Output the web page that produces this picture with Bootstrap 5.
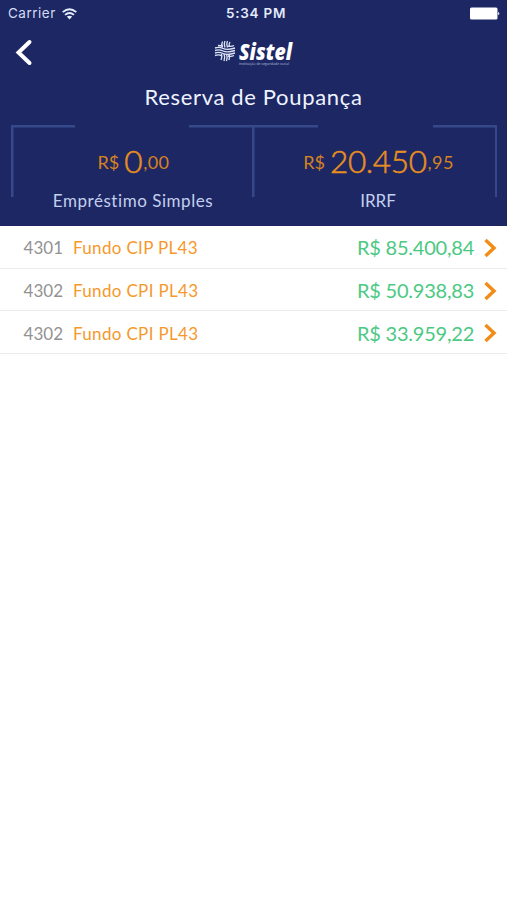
<!DOCTYPE html>
<html lang="pt-BR">
<head>
<meta charset="utf-8">
<meta name="viewport" content="width=device-width, initial-scale=1">
<title>Reserva de Poupança</title>
<link href="https://cdn.jsdelivr.net/npm/bootstrap@5.3.0/dist/css/bootstrap.min.css" rel="stylesheet">
<style>
body{font-family:Lato,"Open Sans",sans-serif;background:#fff;color:#fff;line-height:1}
.top-area{background:#1d2764;height:226px}
.status-line{height:27px;padding:0 7px 0 8px;font-family:Inter,"Liberation Sans",sans-serif;font-size:13.5px;color:#d3dcf3}
.status-line>*{flex:1 1 0}
.carrier{letter-spacing:.5px;padding-top:1px}
.wifi{margin-left:6px}
.clock{font-weight:600;font-size:13.5px;letter-spacing:.75px;color:#e3eafa;padding:1px 0 0 4px}
.brand-bar{height:51px;padding:0 15px}
.brand-bar>*{flex:1 1 0}
.brand-bar svg{overflow:visible}
.page-title{height:39px;font-size:22px;letter-spacing:.66px;color:#eef4ff}
.boxes{margin:8px 10px 0 11px}
.box-cell{height:72px;--ln:#34488a;background:
 linear-gradient(var(--ln),var(--ln)) 0 0/64px 2.5px no-repeat,
 linear-gradient(var(--ln),var(--ln)) 100% 0/65px 2.5px no-repeat,
 linear-gradient(var(--ln),var(--ln)) 0 0/2.5px 100% no-repeat}
.box-cell.last{background:
 linear-gradient(var(--ln),var(--ln)) 0 0/66px 2.5px no-repeat,
 linear-gradient(var(--ln),var(--ln)) 100% 0/64px 2.5px no-repeat,
 linear-gradient(var(--ln),var(--ln)) 0 0/2.5px 100% no-repeat,
 linear-gradient(var(--ln),var(--ln)) 100% 0/2.5px 100% no-repeat;margin-left:-2px}
.amount{color:#d88220;padding:2px 0 0 2px;font-size:18px}
.amount strong{font-weight:300;font-size:31.5px;color:#e88e20;-webkit-text-stroke:.55px #e88e20;margin:-1px 1px 0;letter-spacing:-.35px}
.amount .minor{letter-spacing:.4px}
.wide-amount{padding-left:8px}
.caption-text{font-size:17px;letter-spacing:.55px;color:#c3cfee;height:18px;line-height:18px;margin-top:-5px;padding-left:1px}
.irrf{padding-left:5px;letter-spacing:0}
.fund{height:42.7px;border-bottom:1.5px solid #ebebeb;padding:2px 10px 0 0}
.code{width:63px;color:#929292;font-size:17px}
.fname{color:#f6982b;font-size:17px;letter-spacing:.33px;margin-left:10px}
.val{color:#4bc983;font-size:20px;letter-spacing:-.23px;margin:-1px 10px 0 0}
</style>
<script src="https://cdn.jsdelivr.net/npm/bootstrap@5.3.0/dist/js/bootstrap.bundle.min.js"></script>
</head>
<body>
<header class="top-area">
  <div class="status-line d-flex align-items-center">
    <div class="d-flex align-items-center"><span class="carrier">Carrier</span>
      <svg class="wifi" width="15" height="12" viewBox="0 0 15 12" fill="none" stroke="#e6ecfa" stroke-width="1.8"><path d="M.7 4.2Q7.5-1.8 14.3 4.2M3 6.9Q7.5 3.1 12 6.9"/><path d="M4.8 8.6Q7.5 6.7 10.2 8.6L7.5 11.5Z" fill="#e6ecfa" stroke="none"/></svg>
    </div>
    <div class="clock text-center">5:34 PM</div>
    <div class="d-flex justify-content-end"><svg width="31" height="13" viewBox="0 0 31 13" fill="#fff"><rect x="1" y=".5" width="27.5" height="12" rx="1.5"/><path d="M29.2 4.7q2.3 1.8 0 3.6z"/></svg></div>
  </div>
  <nav class="brand-bar d-flex align-items-center">
    <div><svg width="18" height="27" viewBox="0 0 18 27" fill="none" stroke="#fff" stroke-width="4" stroke-linecap="round"><path d="M14.500 3L3.500 13.500L14.500 24"/></svg></div>
    <div class="d-flex justify-content-center">
      <svg width="80" height="30" viewBox="0 0 80 30">
        <g fill="none" stroke="#dce4f8" stroke-width="1.35">
          <path d="M4 7.500q3 0 5 1M1 10q4-1.500 8 .5t12-.5M1 12.500q4-1.500 8 .5t12-.5M1 15q4-1.500 8 .5t12-.5M1 17.500q4-1.500 7 .5M14 18q3 1 6-.5M14 8q3 1 6-.5"/>
          <path d="M8.500 3.500q-1.500 3 0 6M11 3q-1.500 3 0 6.500M13.500 3q-1.500 3 0 6.500M16 4q-1.500 2.500-.5 4M7.500 16q1 3-.5 6M10 16q1.500 3 0 7M12.500 16q1.500 3 0 7M15 16q1 3 0 6"/>
        </g>
        <text x="25" y="22.300" textLength="53" lengthAdjust="spacingAndGlyphs" font-family="Open Sans" font-size="23" font-weight="800" font-style="italic" fill="#fff">Sistel</text>
        <text x="25" y="27" textLength="50" lengthAdjust="spacingAndGlyphs" font-family="Open Sans" font-size="3.3" fill="#b4bfdf">instituição de seguridade social</text>
      </svg>
    </div>
    <div></div>
  </nav>
  <h1 class="page-title d-flex align-items-center justify-content-center m-0 fw-normal">Reserva de Poupança</h1>
  <section class="boxes row g-0">
    <div class="col-6">
      <div class="box-cell d-flex justify-content-center"><div class="amount d-flex align-items-center"><span class="me-1">R$</span><strong>0</strong><span class="minor">,00</span></div></div>
      <div class="caption-text text-center">Empréstimo Simples</div>
    </div>
    <div class="col-6">
      <div class="box-cell last d-flex justify-content-center"><div class="amount wide-amount d-flex align-items-center"><span class="me-1">R$</span><strong>20.450</strong><span class="minor">,95</span></div></div>
      <div class="caption-text irrf text-center">IRRF</div>
    </div>
  </section>
</header>
<main>
  <div class="fund d-flex align-items-center"><span class="code text-end">4301</span><span class="fname">Fundo CIP PL43</span><span class="val ms-auto">R$ 85.400,84</span><svg width="13" height="20" viewBox="0 0 13 20" fill="none" stroke="#f28c18" stroke-width="3.4"><path d="M1.500 2L10 10L1.500 18"/></svg></div>
  <div class="fund d-flex align-items-center"><span class="code text-end">4302</span><span class="fname">Fundo CPI PL43</span><span class="val ms-auto">R$ 50.938,83</span><svg width="13" height="20" viewBox="0 0 13 20" fill="none" stroke="#f28c18" stroke-width="3.4"><path d="M1.500 2L10 10L1.500 18"/></svg></div>
  <div class="fund d-flex align-items-center"><span class="code text-end">4302</span><span class="fname">Fundo CPI PL43</span><span class="val ms-auto">R$ 33.959,22</span><svg width="13" height="20" viewBox="0 0 13 20" fill="none" stroke="#f28c18" stroke-width="3.4"><path d="M1.500 2L10 10L1.500 18"/></svg></div>
</main>
</body>
</html>
